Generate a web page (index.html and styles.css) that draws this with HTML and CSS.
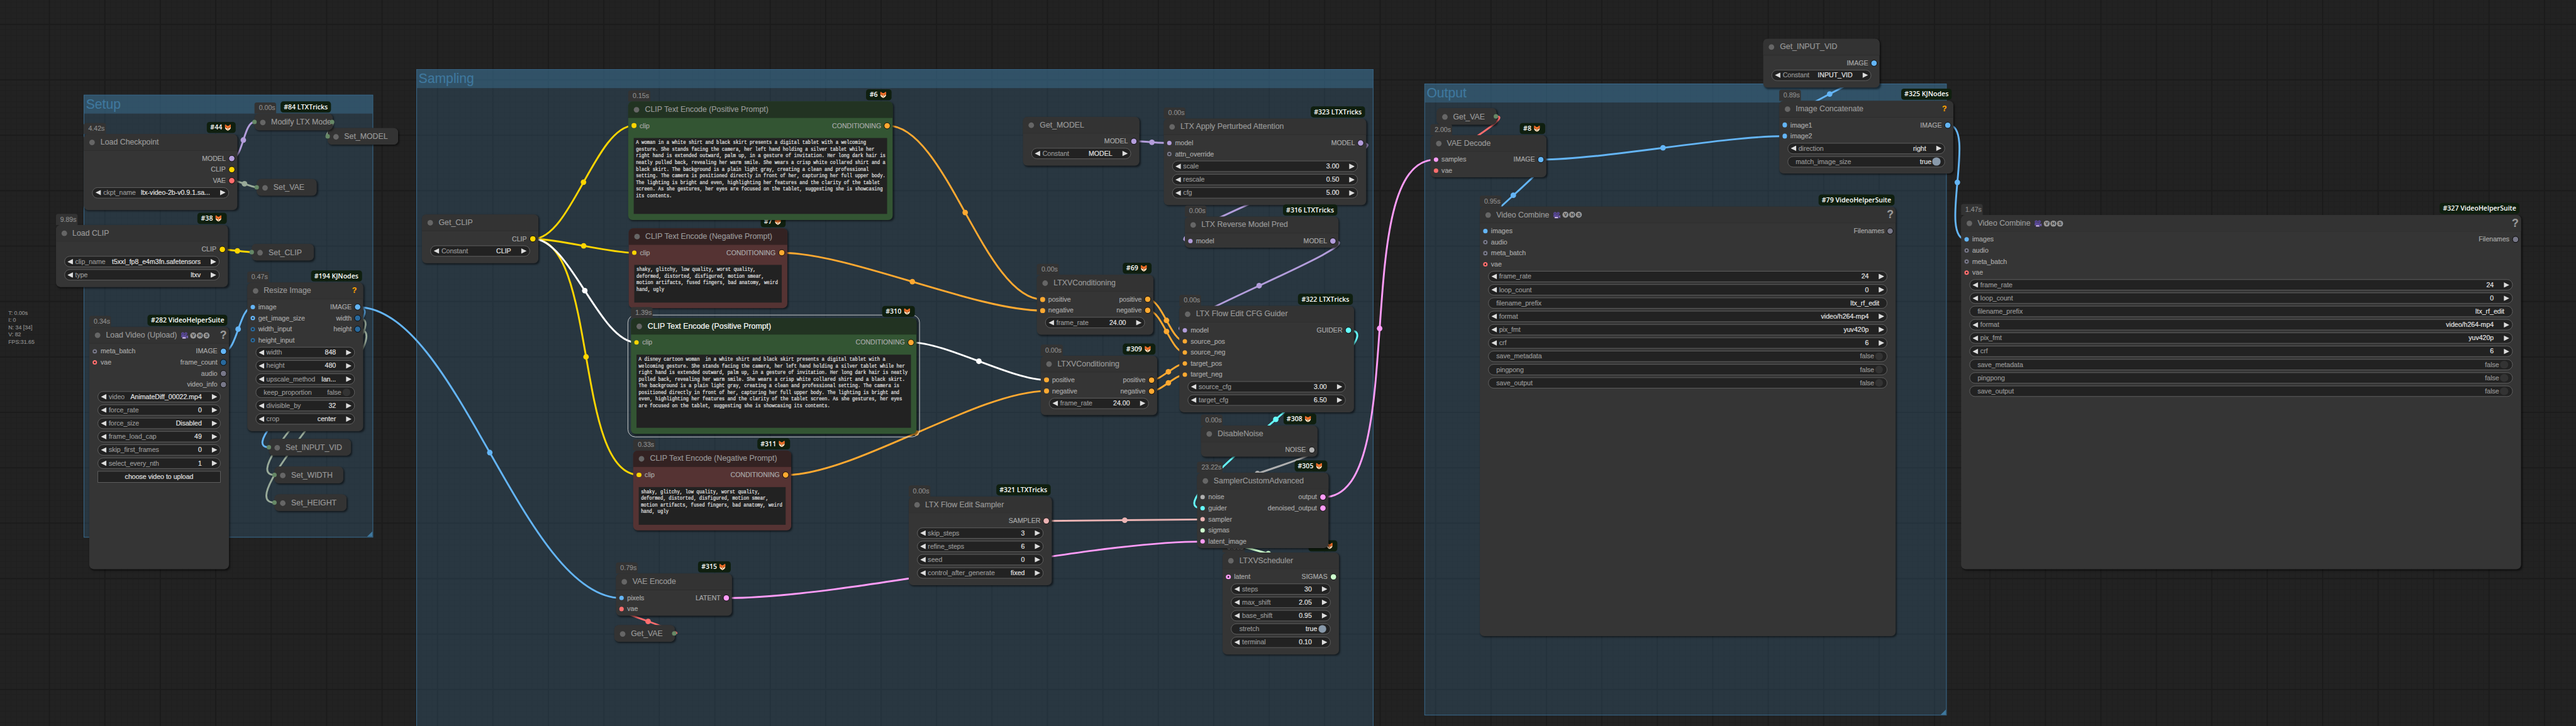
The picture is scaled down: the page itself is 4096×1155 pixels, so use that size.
FILE: index.html
```
<!DOCTYPE html>
<html lang="en">
<head>
<meta charset="utf-8">
<title>LTX Flow Edit workflow</title>
<link rel="stylesheet" href="styles.css">
</head>
<body>
<svg class="defs" aria-hidden="true">
  <symbol id="fox" viewBox="0 0 24 24">
    <path d="M2 1 C6 2 8 4 9 6 H15 C16 4 18 2 22 1 C23 5 23 9 22 12 C22 18 17 21 12 23 C7 21 2 18 2 12 C1 9 1 5 2 1Z" fill="#f4762b"/>
    <path d="M4 4 L7 8 L4 9Z M20 4 L17 8 L20 9Z" fill="#c33b1e"/>
    <path d="M1.500 13 C5 12 9 13 12 18 C15 13 19 12 22.500 13 C21 19 16 22 12 23.500 C8 22 3 19 1.500 13Z" fill="#ffe2c0"/>
    <circle cx="7.500" cy="13" r="1.600" fill="#3a1d16"/><circle cx="16.500" cy="13" r="1.600" fill="#3a1d16"/>
    <path d="M10 18 H14 L12 20.500Z" fill="#3a1d16"/>
  </symbol>
  <symbol id="camera" viewBox="0 0 26 24">
    <circle cx="7" cy="6" r="5.500" fill="#5b4a98"/><circle cx="18" cy="5.500" r="5" fill="#5b4a98"/>
    <circle cx="7" cy="6" r="2" fill="#3b3168"/><circle cx="18" cy="5.500" r="1.800" fill="#3b3168"/>
    <path d="M3 10 H20 V23 H5 V17 L1 19 V12Z" fill="#5b4a98"/>
    <path d="M20 14 L26 11 V22 L20 19Z" fill="#7262ad"/>
    <path d="M6 18 H17 V22 H6Z" fill="#d9c8e6"/>
  </symbol>
</svg>
<div class="view">
<main class="canvas">
  <section class="group g-setup"><h2>Setup</h2></section>
  <section class="group g-sampling"><h2>Sampling</h2></section>
  <section class="group g-output"><h2>Output</h2></section>

  <svg class="links" viewBox="0 0 4646 1310">
    <g class="model">
      <path d="M418.800 285.500C438 285.500 439.800 220 459 220"/><circle cx="438.900" cy="252.700" r="5"/>
      <path d="M2046.300 255C2062 255 2093.300 258.300 2109 258.300"/><circle cx="2077.600" cy="256.700" r="5"/>
      <path d="M2455.400 258.300C2544.400 258.300 2057.600 435 2146.600 435"/>
      <path d="M2405.400 435C2483.700 435 2058.600 596 2136.900 596"/><circle cx="2271" cy="515.500" r="5"/>
    </g>
    <g class="any">
      <path d="M418.800 325.500C430.300 325.500 451.700 338 463.200 338"/><circle cx="441" cy="331.700" r="5"/>
      <path d="M599.600 220C606.500 220 583.900 246 590.800 246"/>
      <path d="M646 574.300C726 574.300 415.300 857 495.300 857"/>
      <path d="M646 594.300C732.800 594.300 408.500 907 495.300 907"/>
    </g>
    <g class="clip">
      <path d="M402 450.300C415.200 450.300 441.200 455 454.400 455"/><circle cx="428.200" cy="452.700" r="5"/>
      <path d="M961.700 431C1030 431 1074.900 226.700 1143.200 226.700"/><circle cx="1052.400" cy="328.800" r="5"/>
      <path d="M961.700 431C1007.700 431 1097.800 456.300 1143.800 456.300"/><circle cx="1052.700" cy="443.600" r="5"/>
      <path d="M961.700 431C1078.400 431 1035.700 857 1152.400 857"/><circle cx="1057" cy="644" r="5"/>
    </g>
    <g class="image">
      <path d="M403.900 634C427.600 634 431.800 554.300 455.500 554.300"/><circle cx="429.500" cy="594" r="5"/>
      <path d="M646 554.300C823 554.300 943.800 1079.200 1120.800 1079.200"/><circle cx="883.400" cy="816.700" r="5"/>
      <path d="M646 554.300C721 554.300 410 807 485 807"/>
      <path d="M2780 288C2890.200 288 3108.500 245.600 3218.700 245.600"/><circle cx="2999.400" cy="266.800" r="5"/>
      <path d="M2780 288C2821 288 2637.800 416.900 2678.800 416.900"/><circle cx="2729.400" cy="352.400" r="5"/>
      <path d="M3381.200 113.700C3430.500 113.700 3169.400 225.600 3218.700 225.600"/><circle cx="3300" cy="169.700" r="5"/>
      <path d="M3513.900 225.600C3566.200 225.600 3494.400 432.300 3546.700 432.300"/><circle cx="3530.300" cy="329" r="5"/>
    </g>
    <g class="cond">
      <path d="M1601.200 226.700C1706.200 226.700 1775.300 540.400 1880.300 540.400"/><circle cx="1740.800" cy="383.500" r="5"/>
      <path d="M1410.600 456.300C1530.900 456.300 1760 560.400 1880.300 560.400"/><circle cx="1645.500" cy="508.300" r="5"/>
      <path d="M1418 857C1541.200 857 1764 705.700 1887.200 705.700"/><circle cx="1652.600" cy="781.300" r="5"/>
      <path d="M2070.900 540.400C2095.900 540.400 2111.900 616 2136.900 616"/><circle cx="2103.900" cy="578.200" r="5"/>
      <path d="M2070.900 560.400C2095.900 560.400 2111.900 636 2136.900 636"/><circle cx="2103.900" cy="598.200" r="5"/>
      <path d="M2077.700 685.700C2094.300 685.700 2120.300 656 2136.900 656"/><circle cx="2107.300" cy="670.900" r="5"/>
      <path d="M2077.700 705.700C2094.300 705.700 2120.300 676 2136.900 676"/><circle cx="2107.300" cy="690.900" r="5"/>
    </g>
    <g class="active">
      <path d="M961.700 431C1027.700 431 1081.800 618 1147.800 618"/><circle cx="1054.700" cy="524.500" r="5"/>
      <path d="M1643.800 618C1707 618 1824 685.700 1887.200 685.700"/><circle cx="1765.500" cy="651.900" r="5"/>
    </g>
    <g class="vae">
      <path d="M1217 1143.300C1243.500 1143.300 1094.300 1099.200 1120.800 1099.200"/><circle cx="1168.900" cy="1121.300" r="5"/>
      <path d="M2699.400 210C2736.200 210 2552.900 308 2589.700 308"/>
    </g>
    <g class="guider"><path d="M2433 596C2537 596 2065 917.300 2169 917.300"/><circle cx="2301" cy="756.700" r="5"/></g>
    <g class="noise"><path d="M2367 812C2421 812 2115 897.300 2169 897.300"/><circle cx="2268" cy="854.700" r="5"/></g>
    <g class="sampler"><path d="M1888.300 940C1958.500 940 2098.800 937.300 2169 937.300"/><circle cx="2028.600" cy="938.700" r="5"/></g>
    <g class="sigmas"><path d="M2406 1041C2468.800 1041 2106.200 957.300 2169 957.300"/><circle cx="2287.500" cy="999.200" r="5"/></g>
    <g class="latent">
      <path d="M1311.300 1079.200C1527.300 1079.200 1953 977.300 2169 977.300"/>
      <path d="M2387 897.300C2547.500 897.300 2429.200 288 2589.700 288"/><circle cx="2488.300" cy="592.700" r="5"/>
    </g>
  </svg>

  <div class="stats"><p>T: 0.00s</p><p>I: 0</p><p>N: 34 [34]</p><p>V: 82</p><p>FPS:31.65</p></div>

  <article class="node mini n-set-model"><header>Set_MODEL</header><i class="port in"></i></article>
  <article class="node mini n84"><span class="time">0.00s</span><span class="badge">#84 LTXTricks</span><header>Modify LTX Mode</header><i class="port in"></i><i class="port out"></i></article>
  <article class="node mini n-set-vae"><header>Set_VAE</header><i class="port in"></i></article>
  <article class="node mini n-set-clip"><header>Set_CLIP</header><i class="port in"></i></article>
  <article class="node mini n-set-vid"><header>Set_INPUT_VID</header><i class="port in"></i></article>
  <article class="node mini n-set-width"><header>Set_WIDTH</header><i class="port in"></i></article>
  <article class="node mini n-set-height"><header>Set_HEIGHT</header><i class="port in"></i></article>

  <article class="node n44">
    <span class="time">4.42s</span><span class="badge">#44 <svg><use href="#fox"/></svg></span>
    <header>Load Checkpoint</header>
    <div class="slots"><ul></ul><ul class="outs"><li class="model">MODEL</li><li class="clip">CLIP</li><li class="vae">VAE</li></ul></div>
    <div class="widgets"><div class="w"><b></b><span>ckpt_name</span><em>ltx-video-2b-v0.9.1.sa...</em><b></b></div></div>
  </article>

  <article class="node n38">
    <span class="time">9.89s</span><span class="badge">#38 <svg><use href="#fox"/></svg></span>
    <header>Load CLIP</header>
    <div class="slots"><ul></ul><ul class="outs"><li class="clip">CLIP</li></ul></div>
    <div class="widgets">
      <div class="w"><b></b><span>clip_name</span><em>t5xxl_fp8_e4m3fn.safetensors</em><b></b></div>
      <div class="w"><b></b><span>type</span><em>ltxv</em><b></b></div>
    </div>
  </article>

  <article class="node n194">
    <span class="time">0.47s</span><span class="badge">#194 KJNodes</span>
    <header>Resize Image<strong class="help kj">?</strong></header>
    <div class="slots">
      <ul><li class="image">image</li><li class="image ring">get_image_size</li><li class="int ring">width_input</li><li class="int ring">height_input</li></ul>
      <ul class="outs"><li class="image">IMAGE</li><li class="int">width</li><li class="int">height</li></ul>
    </div>
    <div class="widgets">
      <div class="w"><b></b><span>width</span><em>848</em><b></b></div>
      <div class="w"><b></b><span>height</span><em>480</em><b></b></div>
      <div class="w"><b></b><span>upscale_method</span><em>lan...</em><b></b></div>
      <div class="w toggle"><span>keep_proportion</span><em>false</em></div>
      <div class="w"><b></b><span>divisible_by</span><em>32</em><b></b></div>
      <div class="w"><b></b><span>crop</span><em>center</em><b></b></div>
    </div>
  </article>

  <article class="node n282">
    <span class="time">0.34s</span><span class="badge">#282 VideoHelperSuite</span>
    <header>Load Video (Upload) <svg class="cam"><use href="#camera"/></svg><i class="vhs">V</i><i class="vhs">H</i><i class="vhs">S</i><strong class="help">?</strong></header>
    <div class="slots">
      <ul><li class="other ring">meta_batch</li><li class="vae ring">vae</li></ul>
      <ul class="outs"><li class="image">IMAGE</li><li class="int">frame_count</li><li class="other">audio</li><li class="other">video_info</li></ul>
    </div>
    <div class="widgets">
      <div class="w"><b></b><span>video</span><em>AnimateDiff_00022.mp4</em><b></b></div>
      <div class="w"><b></b><span>force_rate</span><em>0</em><b></b></div>
      <div class="w"><b></b><span>force_size</span><em>Disabled</em><b></b></div>
      <div class="w"><b></b><span>frame_load_cap</span><em>49</em><b></b></div>
      <div class="w"><b></b><span>skip_first_frames</span><em>0</em><b></b></div>
      <div class="w"><b></b><span>select_every_nth</span><em>1</em><b></b></div>
      <button>choose video to upload</button>
    </div>
  </article>

  <article class="node n-get-clip">
    <header>Get_CLIP</header>
    <div class="slots"><ul></ul><ul class="outs"><li class="clip">CLIP</li></ul></div>
    <div class="widgets"><div class="w"><b></b><span>Constant</span><em>CLIP</em><b></b></div></div>
  </article>

  <article class="node red n7">
    <span class="badge">#7 <svg><use href="#fox"/></svg></span>
    <header>CLIP Text Encode (Negative Prompt)</header>
    <div class="slots"><ul><li class="clip">clip</li></ul><ul class="outs"><li class="cond">CONDITIONING</li></ul></div>
    <div class="prompt"><p>shaky, glitchy, low quality, worst quality,
deformed, distorted, disfigured, motion smear,
motion artifacts, fused fingers, bad anatomy, weird
hand, ugly</p></div>
  </article>

  <article class="node green n6">
    <span class="time">0.15s</span><span class="badge">#6 <svg><use href="#fox"/></svg></span>
    <header>CLIP Text Encode (Positive Prompt)</header>
    <div class="slots"><ul><li class="clip">clip</li></ul><ul class="outs"><li class="cond">CONDITIONING</li></ul></div>
    <div class="prompt"><p>A woman in a white shirt and black skirt presents a digital tablet with a welcoming
gesture. She stands facing the camera, her left hand holding a silver tablet while her
right hand is extended outward, palm up, in a gesture of invitation. Her long dark hair is
neatly pulled back, revealing her warm smile. She wears a crisp white collared shirt and a
black skirt. The background is a plain light gray, creating a clean and professional
setting. The camera is positioned directly in front of her, capturing her full upper body.
The lighting is bright and even, highlighting her features and the clarity of the tablet
screen. As she gestures, her eyes are focused on the tablet, suggesting she is showcasing
its contents.</p></div>
  </article>

  <article class="node green selected n310">
    <span class="time">1.39s</span><span class="badge">#310 <svg><use href="#fox"/></svg></span>
    <header>CLIP Text Encode (Positive Prompt)</header>
    <div class="slots"><ul><li class="clip">clip</li></ul><ul class="outs"><li class="cond">CONDITIONING</li></ul></div>
    <div class="prompt"><p>A disney cartoon woman  in a white shirt and black skirt presents a digital tablet with a
welcoming gesture. She stands facing the camera, her left hand holding a silver tablet while her
right hand is extended outward, palm up, in a gesture of invitation. Her long dark hair is neatly
pulled back, revealing her warm smile. She wears a crisp white collared shirt and a black skirt.
The background is a plain light gray, creating a clean and professional setting. The camera is
positioned directly in front of her, capturing her full upper body. The lighting is bright and
even, highlighting her features and the clarity of the tablet screen. As she gestures, her eyes
are focused on the tablet, suggesting she is showcasing its contents.</p></div>
  </article>

  <article class="node red n311">
    <span class="time">0.33s</span><span class="badge">#311 <svg><use href="#fox"/></svg></span>
    <header>CLIP Text Encode (Negative Prompt)</header>
    <div class="slots"><ul><li class="clip">clip</li></ul><ul class="outs"><li class="cond">CONDITIONING</li></ul></div>
    <div class="prompt"><p>shaky, glitchy, low quality, worst quality,
deformed, distorted, disfigured, motion smear,
motion artifacts, fused fingers, bad anatomy, weird
hand, ugly</p></div>
  </article>

  <article class="node n315">
    <span class="time">0.79s</span><span class="badge">#315 <svg><use href="#fox"/></svg></span>
    <header>VAE Encode</header>
    <div class="slots"><ul><li class="image">pixels</li><li class="vae">vae</li></ul><ul class="outs"><li class="latent">LATENT</li></ul></div>
  </article>
  <article class="node mini n-get-vae"><header>Get_VAE</header><i class="port out"></i></article>

  <article class="node n69">
    <span class="time">0.00s</span><span class="badge">#69 <svg><use href="#fox"/></svg></span>
    <header>LTXVConditioning</header>
    <div class="slots"><ul><li class="cond">positive</li><li class="cond">negative</li></ul><ul class="outs"><li class="cond">positive</li><li class="cond">negative</li></ul></div>
    <div class="widgets"><div class="w"><b></b><span>frame_rate</span><em>24.00</em><b></b></div></div>
  </article>

  <article class="node n309">
    <span class="time">0.00s</span><span class="badge">#309 <svg><use href="#fox"/></svg></span>
    <header>LTXVConditioning</header>
    <div class="slots"><ul><li class="cond">positive</li><li class="cond">negative</li></ul><ul class="outs"><li class="cond">positive</li><li class="cond">negative</li></ul></div>
    <div class="widgets"><div class="w"><b></b><span>frame_rate</span><em>24.00</em><b></b></div></div>
  </article>

  <article class="node n-get-model">
    <header>Get_MODEL</header>
    <div class="slots"><ul></ul><ul class="outs"><li class="model">MODEL</li></ul></div>
    <div class="widgets"><div class="w"><b></b><span>Constant</span><em>MODEL</em><b></b></div></div>
  </article>

  <article class="node n323">
    <span class="time">0.00s</span><span class="badge">#323 LTXTricks</span>
    <header>LTX Apply Perturbed Attention</header>
    <div class="slots"><ul><li class="model">model</li><li class="other ring">attn_override</li></ul><ul class="outs"><li class="model">MODEL</li></ul></div>
    <div class="widgets">
      <div class="w"><b></b><span>scale</span><em>3.00</em><b></b></div>
      <div class="w"><b></b><span>rescale</span><em>0.50</em><b></b></div>
      <div class="w"><b></b><span>cfg</span><em>5.00</em><b></b></div>
    </div>
  </article>

  <article class="node n316">
    <span class="time">0.00s</span><span class="badge">#316 LTXTricks</span>
    <header>LTX Reverse Model Pred</header>
    <div class="slots"><ul><li class="model">model</li></ul><ul class="outs"><li class="model">MODEL</li></ul></div>
  </article>

  <article class="node n322">
    <span class="time">0.00s</span><span class="badge">#322 LTXTricks</span>
    <header>LTX Flow Edit CFG Guider</header>
    <div class="slots">
      <ul><li class="model">model</li><li class="cond">source_pos</li><li class="cond">source_neg</li><li class="cond">target_pos</li><li class="cond">target_neg</li></ul>
      <ul class="outs"><li class="guider">GUIDER</li></ul>
    </div>
    <div class="widgets">
      <div class="w"><b></b><span>source_cfg</span><em>3.00</em><b></b></div>
      <div class="w"><b></b><span>target_cfg</span><em>6.50</em><b></b></div>
    </div>
  </article>

  <article class="node n308">
    <span class="time">0.00s</span><span class="badge">#308 <svg><use href="#fox"/></svg></span>
    <header>DisableNoise</header>
    <div class="slots"><ul></ul><ul class="outs"><li class="noise">NOISE</li></ul></div>
  </article>

  <article class="node n321">
    <span class="time">0.00s</span><span class="badge">#321 LTXTricks</span>
    <header>LTX Flow Edit Sampler</header>
    <div class="slots"><ul></ul><ul class="outs"><li class="sampler">SAMPLER</li></ul></div>
    <div class="widgets">
      <div class="w"><b></b><span>skip_steps</span><em>3</em><b></b></div>
      <div class="w"><b></b><span>refine_steps</span><em>6</em><b></b></div>
      <div class="w"><b></b><span>seed</span><em>0</em><b></b></div>
      <div class="w"><b></b><span>control_after_generate</span><em>fixed</em><b></b></div>
    </div>
  </article>

  <article class="node n71">
    <span class="time">0.00s</span><span class="badge">#71 <svg><use href="#fox"/></svg></span>
    <header>LTXVScheduler</header>
    <div class="slots"><ul><li class="latent ring">latent</li></ul><ul class="outs"><li class="sigmas">SIGMAS</li></ul></div>
    <div class="widgets">
      <div class="w"><b></b><span>steps</span><em>30</em><b></b></div>
      <div class="w"><b></b><span>max_shift</span><em>2.05</em><b></b></div>
      <div class="w"><b></b><span>base_shift</span><em>0.95</em><b></b></div>
      <div class="w toggle on"><span>stretch</span><em>true</em></div>
      <div class="w"><b></b><span>terminal</span><em>0.10</em><b></b></div>
    </div>
  </article>

  <article class="node n305">
    <span class="time">23.22s</span><span class="badge">#305 <svg><use href="#fox"/></svg></span>
    <header>SamplerCustomAdvanced</header>
    <div class="slots">
      <ul><li class="noise">noise</li><li class="guider">guider</li><li class="sampler">sampler</li><li class="sigmas">sigmas</li><li class="latent">latent_image</li></ul>
      <ul class="outs"><li class="latent">output</li><li class="latent">denoised_output</li></ul>
    </div>
  </article>

  <article class="node mini n-get-vae2"><header>Get_VAE</header><i class="port out"></i></article>
  <article class="node n8">
    <span class="time">2.00s</span><span class="badge">#8 <svg><use href="#fox"/></svg></span>
    <header>VAE Decode</header>
    <div class="slots"><ul><li class="latent">samples</li><li class="vae">vae</li></ul><ul class="outs"><li class="image">IMAGE</li></ul></div>
  </article>

  <article class="node n-get-vid">
    <header>Get_INPUT_VID</header>
    <div class="slots"><ul></ul><ul class="outs"><li class="image">IMAGE</li></ul></div>
    <div class="widgets"><div class="w"><b></b><span>Constant</span><em>INPUT_VID</em><b></b></div></div>
  </article>

  <article class="node n325">
    <span class="time">0.89s</span><span class="badge">#325 KJNodes</span>
    <header>Image Concatenate<strong class="help kj">?</strong></header>
    <div class="slots"><ul><li class="image">image1</li><li class="image">image2</li></ul><ul class="outs"><li class="image">IMAGE</li></ul></div>
    <div class="widgets">
      <div class="w"><b></b><span>direction</span><em>right</em><b></b></div>
      <div class="w toggle on"><span>match_image_size</span><em>true</em></div>
    </div>
  </article>

  <article class="node n79">
    <span class="time">0.95s</span><span class="badge">#79 VideoHelperSuite</span>
    <header>Video Combine <svg class="cam"><use href="#camera"/></svg><i class="vhs">V</i><i class="vhs">H</i><i class="vhs">S</i><strong class="help">?</strong></header>
    <div class="slots"><ul><li class="image">images</li><li class="other ring">audio</li><li class="other ring">meta_batch</li><li class="vae ring">vae</li></ul><ul class="outs"><li class="other">Filenames</li></ul></div>
    <div class="widgets">
      <div class="w"><b></b><span>frame_rate</span><em>24</em><b></b></div>
      <div class="w"><b></b><span>loop_count</span><em>0</em><b></b></div>
      <div class="w text"><span>filename_prefix</span><em>ltx_rf_edit</em></div>
      <div class="w"><b></b><span>format</span><em>video/h264-mp4</em><b></b></div>
      <div class="w"><b></b><span>pix_fmt</span><em>yuv420p</em><b></b></div>
      <div class="w"><b></b><span>crf</span><em>6</em><b></b></div>
      <div class="w toggle"><span>save_metadata</span><em>false</em></div>
      <div class="w toggle"><span>pingpong</span><em>false</em></div>
      <div class="w toggle"><span>save_output</span><em>false</em></div>
    </div>
  </article>

  <article class="node n327">
    <span class="time">1.47s</span><span class="badge">#327 VideoHelperSuite</span>
    <header>Video Combine <svg class="cam"><use href="#camera"/></svg><i class="vhs">V</i><i class="vhs">H</i><i class="vhs">S</i><strong class="help">?</strong></header>
    <div class="slots"><ul><li class="image">images</li><li class="other ring">audio</li><li class="other ring">meta_batch</li><li class="vae ring">vae</li></ul><ul class="outs"><li class="other">Filenames</li></ul></div>
    <div class="widgets">
      <div class="w"><b></b><span>frame_rate</span><em>24</em><b></b></div>
      <div class="w"><b></b><span>loop_count</span><em>0</em><b></b></div>
      <div class="w text"><span>filename_prefix</span><em>ltx_rf_edit</em></div>
      <div class="w"><b></b><span>format</span><em>video/h264-mp4</em><b></b></div>
      <div class="w"><b></b><span>pix_fmt</span><em>yuv420p</em><b></b></div>
      <div class="w"><b></b><span>crf</span><em>6</em><b></b></div>
      <div class="w toggle"><span>save_metadata</span><em>false</em></div>
      <div class="w toggle"><span>pingpong</span><em>false</em></div>
      <div class="w toggle"><span>save_output</span><em>false</em></div>
    </div>
  </article>
</main>
</div>
</body>
</html>
```
FILE: styles.css
```
* { box-sizing: border-box; margin: 0; padding: 0; }
html, body { width: 100%; height: 100%; overflow: hidden; background: #222; }
body { font: 12px "Liberation Sans", Arial, sans-serif; color: #aaa; }
ul { list-style: none; }
.defs { position: absolute; width: 0; height: 0; }

/* The graph is laid out in canvas units; the view is zoomed to fit. */
.view { width: 100vw; height: 100vh; overflow: hidden; contain: strict; }
.canvas {
  position: relative;
  width: 4646px;
  height: 1310px;
  overflow: hidden;
  transform: scale(.88161);
  transform-origin: 0 0;
  -webkit-text-stroke: .2px;
  background-color: #222;
  background-image:
    linear-gradient(90deg, #1b1b1b 2px, transparent 2px),
    linear-gradient(#1b1b1b 2px, transparent 2px),
    linear-gradient(90deg, #1f1f1f 1px, transparent 1px),
    linear-gradient(#1f1f1f 1px, transparent 1px);
  background-size: 100px 100px, 100px 100px, 10px 10px, 10px 10px;
  background-position: 88px 0, 0 43px, 9px 0, 0 3px;
}

/* Groups */
.group { position: absolute; background: rgba(63, 120, 158, .25); border: 1px solid #3b7096; }
.group h2 {
  height: 33px; padding-left: 3px;
  background: rgba(63, 120, 158, .42);
  color: #3f789e; font-size: 24px; font-weight: 400; line-height: 31px;
}
.group::after {
  content: ""; position: absolute; right: 0; bottom: 0; width: 10px; height: 10px;
  background: #3f789e; clip-path: polygon(100% 0, 100% 100%, 0 100%);
}
.g-setup { left: 151px; top: 171px; width: 522px; height: 798.500px; }
.g-sampling { left: 751px; top: 125px; width: 1726px; height: 1185px; border-bottom: 0; }
.g-sampling::after { content: none; }
.g-output { left: 2569px; top: 151px; width: 942px; height: 1140px; }

/* Slot and link colours */
.model { --c: #b39ddb; } .clip { --c: #ffd500; } .vae { --c: #ff6e6e; }
.image { --c: #64b5f6; } .cond { --c: #ffa931; } .latent { --c: #ff9cf9; }
.guider { --c: #66ffff; } .noise { --c: #b0b0b0; } .sampler { --c: #ecb4b4; }
.sigmas { --c: #cdffcd; } .int { --c: #29699c; } .other { --c: #777788; }
.any { --c: #99aa99; } .active { --c: #fff; }

.links { position: absolute; left: 0; top: 0; width: 4646px; height: 1310px; }
.links path { fill: none; stroke: var(--c); stroke-width: 3.300; }
.links circle { fill: var(--c); }

.stats { position: absolute; left: 15px; top: 558px; font-size: 10px; line-height: 13px; color: #8c8c8c; }

/* Nodes */
.node {
  position: absolute; display: flex; flex-direction: column;
  background: #353535; border-radius: 8px;
  box-shadow: 2px 2px 3px rgba(0, 0, 0, .5);
}
.node header {
  display: flex; align-items: center; height: 30px; flex: none;
  background: #333; border-bottom: 1px solid #2c2c2c; border-radius: 8px 8px 0 0;
  color: #999; font-size: 14px; line-height: 29px; white-space: pre;
}
.node header::before {
  content: ""; width: 10px; height: 10px; margin: 1px 10px 0; border-radius: 50%; background: #666; flex: none;
}
.green { background: #335533; } .green header { background: #223322; border-color: #1f331f; }
.red { background: #553333; } .red header { background: #332222; border-color: #3a2424; }
.selected header { color: #fff; }
.selected::before {
  content: ""; position: absolute; inset: -6.500px; border: 1px solid #ddd; border-radius: 14px;
}
.time {
  position: absolute; left: 0; top: -20px; height: 20px; padding: 0 2px 0 8px;
  background: #333; border-radius: 4px 4px 0 0; color: #8c8c8c; line-height: 20px;
}
.badge {
  position: absolute; right: 2.500px; top: -22px; display: flex; align-items: center;
  height: 20px; padding: 0 6px 1px; border-radius: 5px; background: #0f1f0f;
  color: #fff; font: 600 12px/19px "Open Sans", "Noto Sans", sans-serif; white-space: pre;
  -webkit-text-stroke: 0;
}
.badge svg { width: 12px; height: 12px; margin: 1px 2.500px 0 1px; }
.cam { width: 13.500px; height: 13px; margin: 2px 3.500px 0 3px; }
.vhs {
  width: 11px; height: 11px; margin: 1px 1px 0 0; border-radius: 50%; background: #999;
  color: #333; font: 700 8px/11px "Liberation Sans", Arial, sans-serif; text-align: center;
}
.help { margin-left: auto; margin-right: 4px; font-size: 20px; font-weight: 700; }
.help.kj { margin-right: 11.500px; color: orange; font-size: 14px; }

/* Collapsed nodes */
.mini { border-radius: 8px; height: 30px; }
.mini header { border: 0; border-radius: 8px; line-height: 30px; }
.port { position: absolute; top: 11px; width: 8px; height: 8px; border-radius: 50%; background: #668866; }
.port.in { left: -4px; } .port.out { right: -3px; }

/* Slots */
.slots { display: flex; justify-content: space-between; padding: 4px 4px 0 6px; }
.slots li { display: flex; align-items: center; gap: 6px; height: 20px; line-height: 22px; }
.slots li::before { content: ""; width: 8.400px; height: 8.400px; border-radius: 50%; background: var(--c); flex: none; }
.slots .ring::before { background: radial-gradient(circle, #222 1.200px, var(--c) 1.900px); }
.outs li { flex-direction: row-reverse; gap: 4.800px; }
.outs li::before { width: 10px; height: 10px; border: 1px solid #000; }

/* Widgets */
.widgets { display: flex; flex-direction: column; gap: 4px; padding: 2px 15px 0; }
.w {
  display: flex; align-items: center; height: 20px; padding: 0 5px;
  background: #222; border: 1px solid #666; border-radius: 10px; color: #999; line-height: 18px;
}
.w em { margin-left: auto; color: #e2e2e2; font-style: normal; }
.w b { width: 10px; height: 10px; background: #ddd; clip-path: polygon(0 0, 100% 50%, 0 100%); }
.w b:first-child { clip-path: polygon(100% 0, 0 50%, 100% 100%); margin-right: 4px; }
.w b:last-child { margin-left: 18px; }
.w.text { padding: 0 14px; }
.w.toggle { padding: 0 7px 0 14px; }
.w.toggle::after { content: ""; width: 14.400px; height: 14.400px; margin-left: 2px; border-radius: 50%; background: #333; }
.w.toggle em { color: #999; }
.w.on em { color: #e2e2e2; }
.w.on::after { background: #8899aa; }
.widgets button {
  height: 20.500px; background: #222; border: 1px solid #666; color: #e2e2e2;
  font: 12px/18px "Liberation Sans", Arial, sans-serif;
}

/* Prompt boxes */
.prompt { flex: 1; margin: 12px 10px 10.500px; padding: 3px 4px; background: #222; overflow: hidden; }
.prompt p {
  width: max-content; white-space: pre; color: #e2e2e2;
  font: 10px/12px "Liberation Mono", "Courier New", monospace;
  transform: scaleX(.8333); transform-origin: 0 0;
  -webkit-text-stroke: .25px;
}

/* Node placement on the canvas */
.n-set-model { left: 590.800px; top: 231px; width: 127px; }
.n84 { left: 459px; top: 205px; width: 140.600px; }
.n-set-vae { left: 463.200px; top: 323px; width: 108px; }
.n-set-clip { left: 454.400px; top: 440px; width: 111.200px; }
.n-set-vid { left: 485px; top: 792px; width: 147.700px; }
.n-set-width { left: 495.300px; top: 842px; width: 124px; }
.n-set-height { left: 495.300px; top: 892px; width: 129.500px; }
.n44 { left: 151.300px; top: 241.500px; width: 276.500px; height: 137.500px; }
.n38 { left: 100.500px; top: 406.300px; width: 310.500px; height: 112.200px; }
.n194 { left: 445.500px; top: 510.300px; width: 209.500px; height: 268px; }
.n282 { left: 161.100px; top: 590px; width: 251.800px; height: 437px; }
.n-get-clip { left: 761.200px; top: 387px; width: 209.600px; height: 88px; }
.n6 { left: 1133.200px; top: 182.700px; width: 477px; height: 214px; }
.n7 { left: 1133.800px; top: 412.300px; width: 285.800px; height: 144px; }
.n310 { left: 1138px; top: 574px; width: 514.800px; height: 208.500px; }
.n311 { left: 1142.400px; top: 813px; width: 284.700px; height: 144px; }
.n315 { left: 1110.800px; top: 1035.200px; width: 209.600px; height: 76px; }
.n-get-vae { left: 1108px; top: 1128.300px; width: 109px; }
.n69 { left: 1870.300px; top: 496.400px; width: 209.600px; height: 108px; }
.n309 { left: 1877.200px; top: 641.700px; width: 209.600px; height: 107.800px; }
.n-get-model { left: 1845.300px; top: 211px; width: 209.800px; height: 88px; }
.n323 { left: 2099px; top: 214.300px; width: 365.400px; height: 156px; }
.n316 { left: 2136.800px; top: 391px; width: 277.600px; height: 56.300px; }
.n322 { left: 2127px; top: 552px; width: 315px; height: 192px; }
.n308 { left: 2166px; top: 768px; width: 210px; height: 56px; }
.n321 { left: 1638.500px; top: 896px; width: 258.800px; height: 159.500px; }
.n71 { left: 2205.300px; top: 997px; width: 209.700px; height: 184px; }
.n305 { left: 2159px; top: 853.300px; width: 237px; height: 136px; }
.n-get-vae2 { left: 2590.700px; top: 195px; width: 108.700px; }
.n8 { left: 2579.500px; top: 244px; width: 209.600px; height: 76px; }
.n-get-vid { left: 3180.300px; top: 69.700px; width: 209.900px; height: 88.500px; }
.n325 { left: 3208.700px; top: 181.600px; width: 314.200px; height: 131.600px; }
.n79 { left: 2668.800px; top: 372.900px; width: 750.700px; height: 775px; }
.n327 { left: 3536.700px; top: 388.300px; width: 1010px; height: 639px; }
```
